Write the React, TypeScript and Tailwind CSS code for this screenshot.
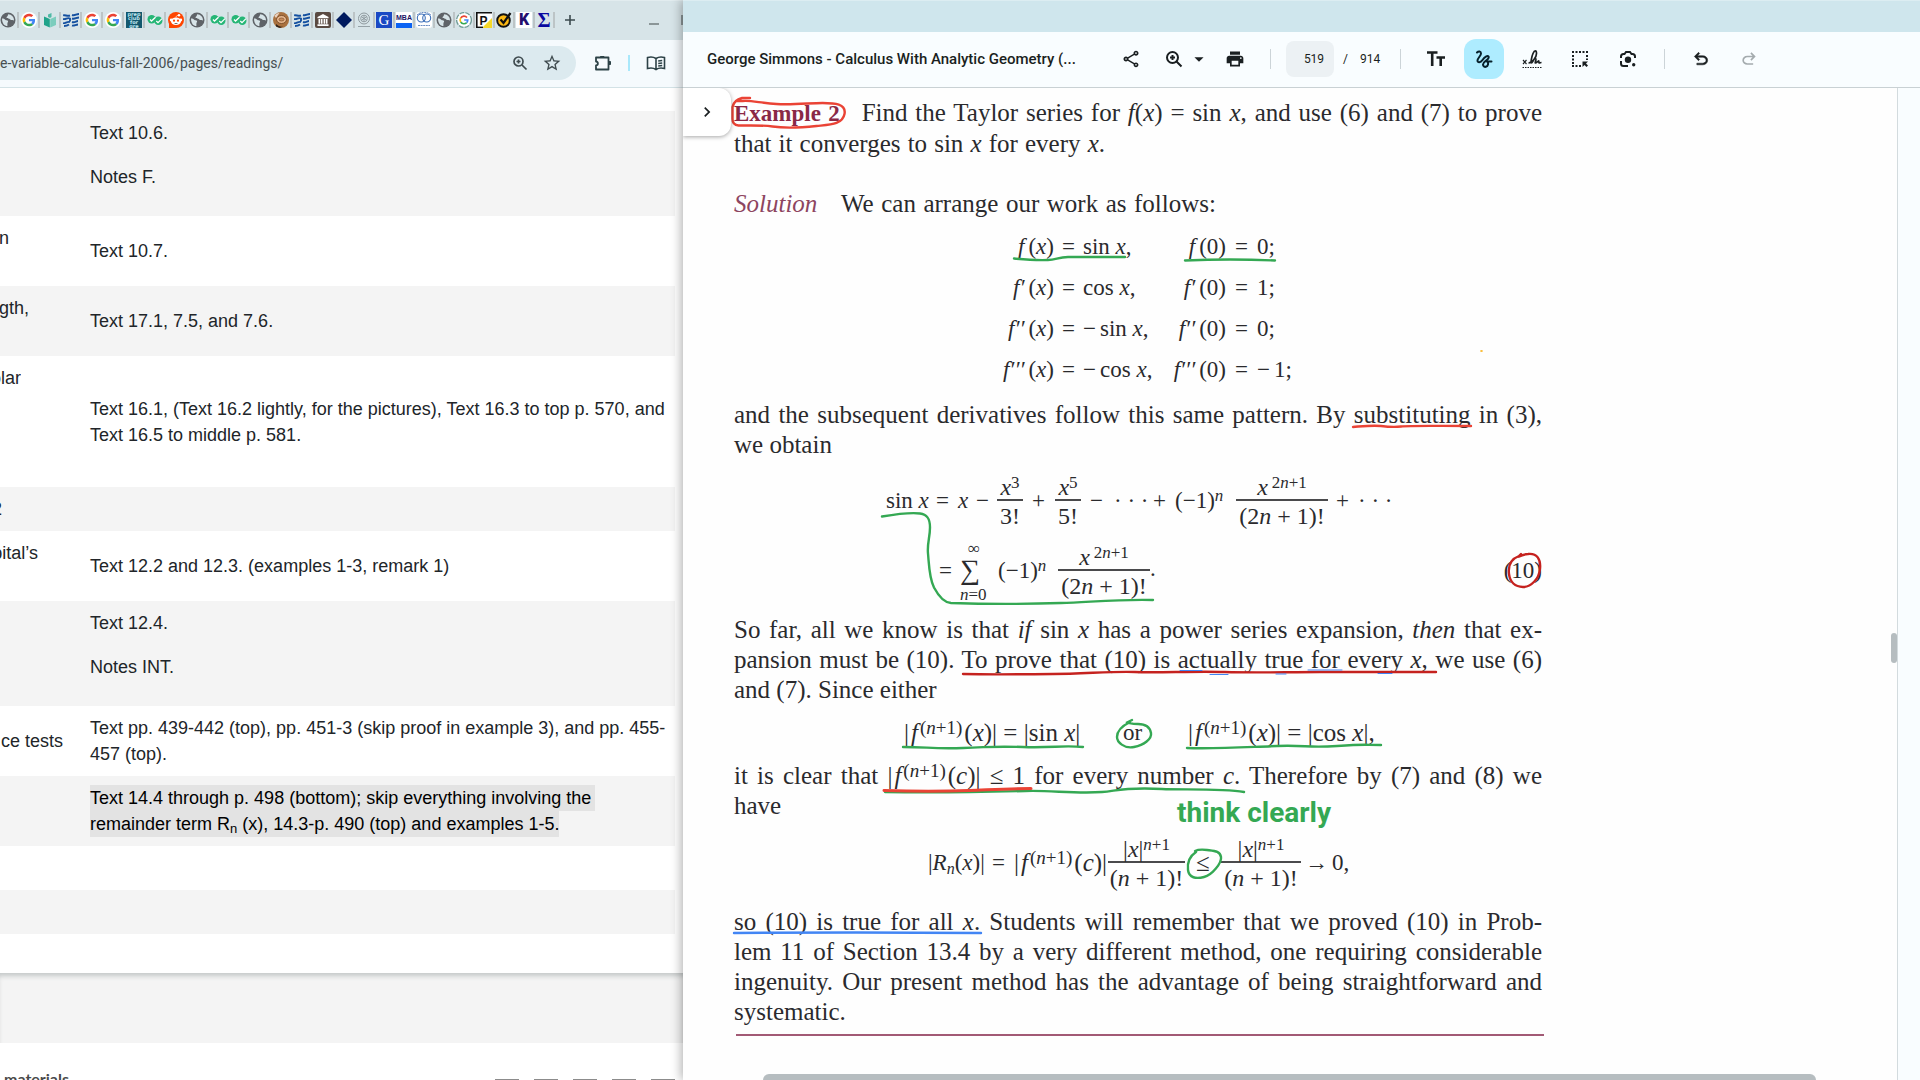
import type { ReactNode } from "react";
import { MdOutlineShare, MdPrint, MdArrowDropDown, MdStarBorder, MdChevronRight } from "react-icons/md";

/* ---------- favicons ---------- */

const Globe = () => (
  <svg viewBox="0 0 16 16" className="size-4">
    <circle cx="8" cy="8" r="7.500" fill="#5f6368" />
    <path d="M2 6.500c1.500 0 2.500.3 3.200 1.200.8.9 2.300.3 2.800 1.300.4 1-.6 1.500-.6 2.500v2.600C4.500 14 2 11.500 2 6.500Z" fill="#d7e4e8" />
    <path d="M8.200 2.200c-.6.8 0 1.300-.8 2.100-.7.700-1.200.8-.6 1.600.7.900 2.400.2 3 1.200.5.900 1.500 1 2.700.9l1.500.5C14 5 11.800 2.400 8.200 2.200Z" fill="#d7e4e8" />
  </svg>
);

const Google = () => (
  <svg viewBox="0 0 48 48" className="size-4">
    <circle cx="24" cy="24" r="24" fill="#fff" />
    <g transform="translate(5 5) scale(.79)">
      <path fill="#EA4335" d="M24 9.500c3.540 0 6.710 1.220 9.210 3.600l6.850-6.850C35.900 2.380 30.470 0 24 0 14.620 0 6.510 5.380 2.560 13.220l7.980 6.190C12.430 13.720 17.740 9.500 24 9.500z" />
      <path fill="#4285F4" d="M46.980 24.550c0-1.570-.15-3.090-.38-4.550H24v9.020h12.940c-.58 2.960-2.260 5.480-4.780 7.180l7.730 6c4.510-4.180 7.090-10.360 7.090-17.650z" />
      <path fill="#FBBC05" d="M10.530 28.590c-.48-1.450-.76-2.990-.76-4.590s.27-3.140.76-4.590l-7.980-6.190C.92 16.460 0 20.120 0 24c0 3.880.92 7.540 2.560 10.780l7.970-6.190z" />
      <path fill="#34A853" d="M24 48c6.480 0 11.930-2.130 15.890-5.810l-7.730-6c-2.150 1.450-4.920 2.300-8.160 2.300-6.260 0-11.570-4.220-13.470-9.910l-7.980 6.190C6.510 42.620 14.620 48 24 48z" />
    </g>
  </svg>
);

const Book = () => (
  <svg viewBox="0 0 16 16" className="size-4">
    <path d="M2 4.500 7.800 7v8.500L2 13Z" fill="#1fa38a" />
    <path d="M14 4.500 8.200 7v8.500L14 13Z" fill="#7ccdbd" />
    <path d="M6 2.500 9.500 1v4L8 6 6 5Z" fill="#4fb9a5" />
  </svg>
);

const Waves = () => (
  <svg viewBox="0 0 16 16" className="size-4" fill="none" stroke="#1450a0" strokeWidth="1.900">
    <path d="M0 3.500c2-1 4 1 7 0M0 7c3 1 4-2 7-.5v3M0 11c2 1 4-2 7-1M1 14c2 0 3 0 5-1.500M9 3c3 1 4-1 7-1M9 6.500c3 1 4-1 7-1M9 10c3 1 4-1 6-1M9 13.500c2 .5 4-1 6-1" />
  </svg>
);

const Prep = () => (
  <span className="block size-4 overflow-hidden bg-[#13586e] text-center font-['DejaVu_Sans'] text-[5px] leading-[4px] font-bold text-[#bfe6ee]">
    prep club for gre
  </span>
);

const Checks = () => (
  <svg viewBox="0 0 16 16" className="size-4">
    <circle cx="4.700" cy="7.300" r="4.200" fill="#26b676" />
    <circle cx="11.300" cy="8.700" r="4.200" fill="#26b676" />
    <path d="m3 7.500 1.500 1.500 4-3.800M9.300 9l1.700 1.600 4-4" fill="none" stroke="#fff" strokeWidth="1.300" />
  </svg>
);

const Reddit = () => (
  <svg viewBox="0 0 16 16" className="size-4">
    <circle cx="8" cy="8" r="8" fill="#ff4500" />
    <path d="M1 11v5h7Z" fill="#ff4500" />
    <ellipse cx="8" cy="9.300" rx="5" ry="3.800" fill="#fff" />
    <circle cx="3.200" cy="8" r="1.400" fill="#fff" />
    <circle cx="12.800" cy="8" r="1.400" fill="#fff" />
    <circle cx="11" cy="3.300" r="1.200" fill="#fff" />
    <path d="M8 5.500c.1-1.500 1-2.200 2.500-2.200" fill="none" stroke="#fff" strokeWidth=".7" />
    <circle cx="6" cy="8.700" r="1.100" fill="#ff4500" />
    <circle cx="10" cy="8.700" r="1.100" fill="#ff4500" />
    <path d="M6 11c1 1 3 1 4 0Z" fill="#222" />
  </svg>
);

const Pot = () => (
  <svg viewBox="0 0 16 16" className="size-4">
    <circle cx="8" cy="8" r="8" fill="#a9713f" />
    <ellipse cx="8.500" cy="7.500" rx="5" ry="4" fill="#e5b58c" stroke="#6f4321" strokeWidth=".8" />
    <ellipse cx="8.500" cy="7.500" rx="2.500" ry="1.500" fill="#c98c5b" stroke="#6f4321" strokeWidth=".6" />
    <path d="M3 12c2 2 5 3 7 2.500L7 16l-4-1.500Z" fill="#33251b" />
    <path d="M1.500 4c1-2 3-3 5-3L3 6Z" fill="#ead3c2" />
  </svg>
);

const Museum = () => (
  <svg viewBox="0 0 16 16" className="size-4">
    <rect width="16" height="16" rx="2" fill="#5a4a42" />
    <path d="M8 2 2.500 5v1.200h11V5ZM3.500 7h1.800v4.800H3.500ZM6 7h1.500v4.800H6ZM8.600 7h1.500v4.800H8.600ZM10.800 7h1.700v4.800h-1.700ZM2.500 12.300h11V14h-11Z" fill="#fff" />
  </svg>
);

const Diamond = () => (
  <svg viewBox="0 0 16 16" className="size-4">
    <path d="M8 0 16 8 8 16 0 8Z" fill="#001a5e" />
  </svg>
);

const Seal = () => (
  <svg viewBox="0 0 16 16" className="size-4" fill="none" stroke="#8f9a9f" strokeWidth="1">
    <circle cx="8" cy="6.500" r="5.500" />
    <circle cx="8" cy="6.500" r="3.300" />
    <path d="M8 4v5M6 5.200l4 2.600M10 5.200 6 7.800M2 14.500h12" strokeWidth=".9" />
  </svg>
);

const GLetter = () => (
  <span className="flex size-4 items-center justify-center bg-[#1a49c4] font-['Liberation_Serif'] text-[15px] leading-4 text-white">G</span>
);

const Mba = () => (
  <span className="flex size-4 flex-col bg-white text-center font-['Liberation_Sans'] text-[7px] leading-[11px] font-bold text-[#1b1464]">
    <span className="h-[11px]">MBA</span>
    <span className="h-[5px] bg-[#0b63f3]" />
  </span>
);

const Rings = () => (
  <svg viewBox="0 0 16 16" className="size-4">
    <rect width="16" height="16" rx="3" fill="#fff" />
    <circle cx="5.300" cy="6" r="4" fill="none" stroke="#3b6fb8" strokeWidth="1.100" />
    <circle cx="10.700" cy="6" r="4" fill="none" stroke="#3b6fb8" strokeWidth="1.100" />
    <path d="M1 3C4-.5 12-.5 15 3M2 13.500h12" fill="none" stroke="#6c8fc4" strokeWidth="1" strokeDasharray="2 .6" />
  </svg>
);

const GRing = () => (
  <svg viewBox="0 0 16 16" className="size-4">
    <circle cx="8" cy="8" r="7.400" fill="#fff" stroke="#6f9b96" strokeWidth="1.300" strokeDasharray="5 1" />
    <path d="M11 5.500A3.900 3.900 0 0 0 4.700 6" fill="none" stroke="#ea4335" strokeWidth="1.600" />
    <path d="M4.700 6a3.900 3.900 0 0 0 0 4" fill="none" stroke="#fbbc05" strokeWidth="1.600" />
    <path d="M4.700 10a3.900 3.900 0 0 0 6 .6" fill="none" stroke="#34a853" strokeWidth="1.600" />
    <path d="M10.700 10.600A4 4 0 0 0 11.800 8H8.200" fill="none" stroke="#4285f4" strokeWidth="1.600" />
  </svg>
);

const PBadge = () => (
  <svg viewBox="0 0 16 16" className="size-4">
    <rect width="16" height="16" fill="#fff" />
    <path d="M16 6v10H6Z" fill="#f5d829" />
    <path d="M.8 16V.8H16" fill="none" stroke="#111" strokeWidth="1.600" />
    <path d="M0 15.300h7" stroke="#111" strokeWidth="1.400" />
    <text x="3.500" y="12.500" fontSize="12" fontWeight="700" fontFamily="Liberation Sans" fill="#111">P</text>
  </svg>
);

const Tick = () => (
  <svg viewBox="0 0 16 16" className="size-4">
    <circle cx="7.500" cy="8.500" r="6.300" fill="#fdb913" stroke="#111" strokeWidth="1.900" />
    <path d="m4.500 7.500 3 3.500L14.500 1" fill="none" stroke="#111" strokeWidth="2.200" />
  </svg>
);

const KBadge = () => (
  <span className="flex size-4 items-center justify-center bg-white font-['Roboto'] text-[16px] leading-4 font-black text-[#240f6e]">K</span>
);

const Sigma = () => (
  <span className="flex size-4 items-center justify-center font-['Liberation_Serif'] text-[20px] leading-4 font-bold text-[#0808a0]">Σ</span>
);

const wideTabs = [Globe, Google, Book, Waves, Google, Google, Prep, Checks, Reddit, Globe, Checks, Checks, Globe, Pot, Waves, Museum];
const tightTabs = [Diamond, Seal, GLetter, Mba, Rings, Globe, GRing, PBadge, Tick, KBadge, Sigma];

const TabStrip = () => (
  <div className="flex h-10 items-center border-t border-[#e2ecef] bg-[#d7e4e8] pb-px text-[#3c4a4e]">
    {wideTabs.map((Icon, i) => (
      <button key={i} aria-label={`Tab ${i + 1}`} className="flex w-[21px] shrink-0 gap-px">
        <Icon />
        <span className="h-4 w-0.5 bg-[#bcc4c6]" />
      </button>
    ))}
    {tightTabs.map((Icon, i) => (
      <button key={i} aria-label={`Tab ${i + 17}`} className="flex w-5 shrink-0 gap-px">
        <Icon />
        <span className="h-4 w-0.5 bg-[#bcc4c6]" />
      </button>
    ))}
    <button aria-label="New tab" className="ml-2 shrink-0">
      <svg viewBox="0 0 12 12" className="size-3" stroke="#3c4a4e" strokeWidth="1.600">
        <path d="M6 1v10M1 6h10" />
      </svg>
    </button>
    <button aria-label="Minimize" className="mt-2 ml-auto h-0.5 w-[10px] bg-[#8b9698]" />
    <button aria-label="Maximize" className="ml-[22px] h-[10px] w-0.5 bg-[#8b9698]" />
  </div>
);

const AddressBar = () => (
  <div className="flex h-12 items-center border-b border-[#d3e2e6] bg-[#f5fafd] pb-px text-[#3b4b50]">
    <div className="flex h-[34px] w-[576px] items-center rounded-r-full bg-[#dceaef]">
      <input
        aria-label="Address"
        readOnly
        value="e-variable-calculus-fall-2006/pages/readings/"
        className="min-w-0 flex-1 bg-transparent font-['Roboto'] text-[14px] text-[#474f51] outline-none"
      />
      <button aria-label="Zoom" className="mr-[14px]">
        <svg viewBox="0 0 16 16" className="size-4" fill="none" stroke="#3f4b4f" strokeWidth="1.700">
          <circle cx="6.500" cy="6.500" r="4.500" />
          <path d="m10 10 4.500 4.500M4.500 6.500h4M6.500 4.500v4" />
        </svg>
      </button>
      <button aria-label="Bookmark" className="mr-[14px] text-[20px] text-[#3f4b4f]">
        <MdStarBorder />
      </button>
    </div>
    <button aria-label="Extensions" className="ml-[18px]">
      <svg viewBox="0 0 18 18" className="size-[18px]" fill="none" stroke="#2d4247" strokeWidth="1.800">
        <path d="M2 3.500h12.500V9v6.500H2v-4c2.500-.3 2.500-3.700 0-4Z" strokeLinejoin="round" />
        <path d="M6.500 2.500h3.500v1H6.500ZM15 7.500h1.500v3H15Z" fill="#2d4247" strokeWidth="1" />
      </svg>
    </button>
    <span className="ml-4 h-4 w-0.5 bg-[#a9e8fb]" />
    <button aria-label="Reading mode" className="ml-4">
      <svg viewBox="0 0 20 16" className="h-4 w-5" fill="none" stroke="#2d4247" strokeWidth="1.600">
        <path d="M10 3.500C7.500 1.800 4 1.800 1.500 2.500v11c2.500-.7 6-.7 8.500 1 2.500-1.700 6-1.700 8.500-1v-11C16 1.800 12.500 1.800 10 3.500Zm0 0v11M12.200 6l4-.5M12.200 8.500l4-.5M12.200 11l4-.5" />
      </svg>
    </button>
  </div>
);

/* ---------- readings table ---------- */

type Row = { h: string; topic?: string; clip?: number; top?: boolean; body?: ReactNode };

const rows: Row[] = [
  { h: "h-[105px]", body: <><p className="mb-[18px]">Text 10.6.</p><p className="mb-[17px]">Notes F.</p></> },
  { h: "h-[70px]", topic: "n", clip: 9, top: true, body: "Text 10.7." },
  { h: "h-[70px]", topic: "gth,", clip: 29, top: true, body: "Text 17.1, 7.5, and 7.6." },
  { h: "h-[131px]", topic: "olar", clip: 21, top: true, body: <>Text 16.1, (Text 16.2 lightly, for the pictures), Text 16.3 to top p. 570, and<br />Text 16.5 to middle p. 581.</> },
  { h: "h-[44px]", topic: "2", clip: 2 },
  { h: "h-[70px]", topic: "pital’s", clip: 38, top: true, body: "Text 12.2 and 12.3. (examples 1-3, remark 1)" },
  { h: "h-[105px]", body: <><p className="mb-[18px]">Text 12.4.</p><p className="mb-[17px]">Notes INT.</p></> },
  { h: "h-[70px]", topic: "ce tests", clip: 63, body: <>Text pp. 439-442 (top), pp. 451-3 (skip proof in example 3), and pp. 455-<br />457 (top).</> },
  {
    h: "h-[70px]",
    body: (
      <span className="text-black">
        <span className="inline-block bg-[#e3e3e3] pr-1">Text 14.4 through p. 498 (bottom); skip everything involving the</span>
        <br />
        <span className="inline-block bg-[#e3e3e3]">
          remainder term R<sub className="text-[13px] leading-none">n</sub> (x), 14.3-p. 490 (top) and examples 1-5.
        </span>
      </span>
    ),
  },
  { h: "h-[44px]" },
  { h: "h-[44px]" },
];

const Readings = () => (
  <table className="mt-[23px] mr-2 border-collapse font-['Liberation_Sans'] text-[18px] leading-[26px] text-[#212529]">
    <tbody>
      {rows.map((r, i) => (
        <tr key={i} className={i % 2 === 0 ? `${r.h} bg-[#f4f4f4]` : `${r.h} bg-white`}>
          <td className={r.top ? "w-[90px] pt-[9px] align-top" : "w-[90px] align-middle"}>
            <div className="flex justify-end overflow-hidden whitespace-nowrap" style={{ width: r.clip ?? 0 }}>
              {r.topic}
            </div>
          </td>
          <td className="align-middle whitespace-nowrap">{r.body}</td>
        </tr>
      ))}
    </tbody>
  </table>
);

const BrowserWindow = () => (
  <section className="flex min-w-0 flex-col overflow-hidden bg-white">
    <TabStrip />
    <AddressBar />
    <div className="flex flex-col">
      <Readings />
      <div className="mt-[39px] h-[70px] bg-[#f4f4f4] shadow-[inset_0_5px_5px_-2px_#c4c8c8]" />
      <div className="flex h-[37px] items-start justify-between overflow-hidden pt-6 pr-2 pl-1 font-['Lato'] text-[16px] leading-6 font-bold text-[#4a4a4a]">
        <span>materials</span>
        <span className="mt-3 flex gap-[15px]">
          {[0, 1, 2, 3, 4].map((i) => (
            <span key={i} className="size-6 border-t-2 border-[#8c8c8c]" />
          ))}
        </span>
      </div>
    </div>
  </section>
);

/* ---------- viewer toolbar ---------- */

const Divider = ({ className }: { className: string }) => <span className={`h-5 w-px bg-[#ccd4d8] ${className}`} />;

const UNDO =
  "M280-200v-80h284q63 0 109.500-40T720-420q0-60-46.500-100T564-560H312l104 104-56 56-200-200 200-200 56 56-104 104h252q97 0 166.500 63T800-420q0 94-69.500 157T564-200H280Z";

const ViewerToolbar = () => (
  <header className="flex h-14 shrink-0 items-center border-b border-[#c9d1d4] bg-[#f9fdff] pb-px pl-6 text-[#1a1f21]">
    <h1 className="w-[360px] font-['Roboto'] text-[15px] font-medium whitespace-nowrap">George Simmons - Calculus With Analytic Geometry (...</h1>
    <button aria-label="Share" className="ml-[54px] text-[20px]"><MdOutlineShare /></button>
    <button aria-label="Zoom" className="ml-6 flex items-center">
      <svg viewBox="0 0 18 18" className="size-[18px]" fill="none" stroke="currentColor" strokeWidth="2">
        <circle cx="7.500" cy="7.500" r="5.500" />
        <path d="m11.500 11.500 5 5M5 7.500h5M7.500 5v5" />
      </svg>
      <MdArrowDropDown className="ml-[5px] text-[22px]" />
    </button>
    <button aria-label="Print" className="ml-[15px] text-[20px]"><MdPrint /></button>
    <Divider className="ml-[25px]" />
    <input
      aria-label="Page"
      readOnly
      value="519"
      className="ml-[15px] h-9 w-12 rounded-lg bg-[#ecf1f4] pl-2 text-center font-['Roboto'] text-[12px] outline-none"
    />
    <span className="ml-[9px] font-['Roboto'] text-[12px]">/</span>
    <span className="ml-3 font-['Roboto'] text-[12px]">914</span>
    <Divider className="ml-5" />
    <button aria-label="Text size" className="ml-[26px]">
      <svg viewBox="0 0 18 16" className="h-4 w-[18px]" stroke="currentColor" strokeWidth="2.600" fill="none">
        <path d="M0 1.500h10.500M5.200 1.500V15M9.500 6.500H18M13.700 6.500V15" />
      </svg>
    </button>
    <button aria-label="Draw" className="ml-[19px] flex h-10 w-10 items-center justify-center rounded-xl bg-[#aeecff]">
      <svg viewBox="0 0 18 18" className="size-[18px]" fill="none" stroke="#07202b" strokeWidth="2" strokeLinecap="round" strokeLinejoin="round">
        <path d="M2 2.500C3.500 1 6 1 6 3.500S2.500 8 2.500 10.500s3 2.500 5-.5 5-5 6-3.500-1 3-3 4.500-3 3.500-2 5 4 1 4.500-1.500-1-3.500-2.500-3.500M13 11.500h3.500" />
      </svg>
    </button>
    <button aria-label="Sign" className="ml-[18px]">
      <svg viewBox="0 0 20 20" className="size-5" fill="none" stroke="currentColor" strokeWidth="1.700">
        <path d="m1 11 3.500 4M4.500 11 1 15" strokeWidth="1.200" />
        <path d="M6.500 14c4 0 8-6 8-9.500C14.500 1 12.500 1 11 4.500 9.500 8 8.500 14 9.500 14s2.500-5 4-4.500-1 4.500 0 4.500 2-1.500 3-2c.7-.3 0 2 .7 2s1.500-.5 2.300-.5" />
        <path d="M.5 18.500h19" strokeDasharray="1.500 1" strokeWidth="1.200" />
      </svg>
    </button>
    <button aria-label="Select area" className="ml-[29px]">
      <svg viewBox="0 0 18 18" className="size-[18px]" fill="none" stroke="currentColor" strokeWidth="2">
        <path d="M1 2h16M1 16h9M2 5v9M16 5v5" strokeDasharray="2 1.500" />
        <path d="M11.500 11.500H17l-2 2 2 2-1.500 1.500-2-2-2 2Z" fill="currentColor" stroke="none" />
      </svg>
    </button>
    <button aria-label="Search with lens" className="ml-[30px]">
      <svg viewBox="0 0 18 18" className="size-[18px]" fill="none" stroke="currentColor" strokeWidth="2">
        <path d="M2 8V6.500Q2 4 4.500 4h1L7 2h4l1.500 2h1Q16 4 16 6.500V8M2 11v2.500Q2 16 4.500 16H9" />
        <circle cx="9" cy="9.700" r="3.200" fill="currentColor" stroke="none" />
        <circle cx="14.700" cy="14.700" r="1.700" fill="currentColor" stroke="none" />
      </svg>
    </button>
    <Divider className="ml-[27px]" />
    <button aria-label="Undo" className="ml-[26px]">
      <svg viewBox="0 -960 960 960" className="size-5" fill="currentColor" stroke="currentColor" strokeWidth="24"><path d={UNDO} /></svg>
    </button>
    <button aria-label="Redo" className="ml-7 text-[#a4abae]" disabled>
      <svg viewBox="0 -960 960 960" className="size-5 -scale-x-100" fill="currentColor"><path d={UNDO} /></svg>
    </button>
  </header>
);

/* ---------- mathematics ---------- */

const Sup = ({ children, className = "text-[17px]" }: { children: ReactNode; className?: string }) => (
  <sup className={`-top-[7px] leading-none ${className}`}>{children}</sup>
);

const Frac = ({ top, bottom, className }: { top: ReactNode; bottom: ReactNode; className: string }) => (
  <span className={`flex shrink-0 flex-col text-center text-[24px] whitespace-nowrap ${className}`}>
    <span className="h-[28px] border-b-2 border-[#4a4a4c] leading-[28px]">{top}</span>
    <span className="h-[28px] leading-[30px]">{bottom}</span>
  </span>
);

const T = ({ w, children }: { w: string; children: ReactNode }) => <span className={`shrink-0 whitespace-nowrap ${w}`}>{children}</span>;

const Line = ({ w = "", children }: { w?: string; children: ReactNode }) => (
  <span className={`block whitespace-nowrap [text-align-last:justify] ${w}`}>{children}</span>
);

const X = () => <i>x</i>;

const power = <><X /><Sup className="ml-1 text-[17px]">2<i>n</i>+1</Sup></>;
const fn = <><span className="mr-0.5">|</span><i>f</i><Sup className="mx-0.5 text-[19px]">(<i>n</i>+1)</Sup></>;
const oddFactorial = <>(2<i>n</i> + 1)!</>;
const absPower = <>|<X />|<Sup><i>n</i>+1</Sup></>;
const factorial = <>(<i>n</i> + 1)!</>;

const derivatives = [
  ["", "sin", "", "0;"],
  ["′", "cos", "", "1;"],
  ["′′", "sin", "−", "0;"],
  ["′′′", "cos", "−", "1;"],
];

const Derivatives = () => (
  <table className="mt-[7px] ml-[262px] border-collapse text-[23px] leading-[41px]">
    <tbody>
      {derivatives.map(([primes, name, sign, v], i) => (
        <tr key={i}>
          <td className="w-[58px] text-right whitespace-nowrap"><i className="mr-1">f{primes}</i>(<X />)</td>
          <td className="w-[29px] text-center">=</td>
          <td className="w-[86px] whitespace-nowrap">{sign && <span className="mr-1">{sign}</span>}{name} <X />,</td>
          <td className="w-[57px] text-right whitespace-nowrap"><i className="mr-1">f{primes}</i>(0)</td>
          <td className="w-[31px] text-center">=</td>
          <td className="whitespace-nowrap">{i === 3 && <span className="mr-1">−</span>}{v}</td>
        </tr>
      ))}
    </tbody>
  </table>
);

/* Handwritten marks laid over the page */
const Ink = () => (
  <svg viewBox="683 88 1237 992" className="pointer-events-none absolute top-0 left-0 h-[992px] w-[1237px]" fill="none" strokeWidth="2.400" strokeLinecap="round">
    <g stroke="#ea4335">
      <path d="M750 98h-8q-8 2-9.500 9V119q0 6 6 6.500c15 0 24-.5 34 1s30 1 44-.5 26-1.500 28-12-10-11-22-11-30 2-46 1-26-4-34-3h-6" />
      <path d="M1353 427c12-1 20-2 28-1s12 1.500 20 .5 30-.5 70-.5" />
    </g>
    <g stroke="#34a853">
      <path d="M1014 258.500q20 2 34 1.500c8 0 10-3 20-3h57" />
      <path d="M1185 260.500q45-2 90 0" />
      <path d="M882 516.500c12-2 30-4 38-3 8 1 10 6 10 14 0 10-3 16-2 26s1 24 6 34q8 15 17 15.500c30 1 80 1 110 0s60-4 92-3" />
      <path d="M903 747c25 0 30 2 60 1s30-2 60-1 40-2 60 0" />
      <path d="M1187 748c30 1 60-1 90-2s30 2 60 0 25-1 44-1" />
      <path d="M1130 722c-10 5-13 10-13 15s7 12 17 10 18-8 17-14-5-9-13-9-10-2-12-1l6-3" />
      <path d="M885 792c50 1 100 0 140-1 25-1 50 3 77 1 15-1 20-5 60-3 20 1 60-1 82 3" />
      <path d="M1196 852c-6 4-9 10-8 18s8 9 16 7 18-14 17-20-6-6-14-7-10 0-12 1" />
    </g>
    <path d="M884 790.500c30 1 60 1 85 0s40-2 62-2" stroke="#ea4335" strokeWidth="3" />
    <g stroke="#c5221f">
      <path d="M1519 556c-8 3-11 10-10 18s6 13 14 13 16-8 17-18-3-16-12-15c-4 0-6 1-10 3l3-3" />
      <path d="M963 674c40 1 60 0 90 0s60-3 82-2 60-1 90 0 60 0 95 0 60 0 116 0" />
    </g>
    <g stroke="#4285f4">
      <path d="M734 933q120-1 247 0" />
      <path d="M1180 670.500h22M1210 674.500h18M1276 674h10M1308 670h34M1378 673.500h14" strokeWidth="1" />
    </g>
    <path d="M1481 351h1" stroke="#f9ab00" strokeWidth="1.600" />
  </svg>
);

const Page = () => (
  <article className="relative w-[808px] font-['Liberation_Serif'] text-[25px] leading-[30px] text-[#2a2a2d]">
    <p className="pt-[10px]">
      <Line>
        <b className="mr-[14px] text-[23px] text-[#8a2846]">Example 2</b> Find the Taylor series for <i>f</i>(<X />) = sin <X />, and use (6) and (7) to prove
      </Line>
      <Line w="w-[371px]">that it converges to sin <X /> for every <X />.</Line>
    </p>
    <p className="mt-[30px] flex">
      <i className="w-[107px] text-[#8d4560]">Solution</i>
      <Line w="w-[375px]">We can arrange our work as follows:</Line>
    </p>
    <Derivatives />
    <p className="mt-[10px]">
      <Line>and the subsequent derivatives follow this same pattern. By substituting in (3),</Line>
      <span>we obtain</span>
    </p>
    <div className="mt-[13px] ml-[152px] flex h-14 items-center text-[23px]">
      <T w="w-[50px]">sin <X /></T>
      <T w="w-[22px]">=</T>
      <T w="w-[18px]"><X /></T>
      <T w="w-[21px]">−</T>
      <Frac className="w-[26px]" top={<><X /><Sup>3</Sup></>} bottom="3!" />
      <T w="w-[32px] pl-[9px]">+</T>
      <Frac className="w-[26px]" top={<><X /><Sup>5</Sup></>} bottom="5!" />
      <T w="w-[33px] pl-[9px]">−</T>
      <T w="w-[39px]">· · ·</T>
      <T w="w-[22px]">+</T>
      <T w="w-[61px]">(−1)<Sup><i>n</i></Sup></T>
      <Frac className="w-[92px]" top={power} bottom={oddFactorial} />
      <T w="w-[30px] pl-2">+</T>
      <T w="w-[39px]">· · ·</T>
    </div>
    <div className="mt-[14px] ml-[205px] flex h-14 items-center text-[23px]">
      <T w="w-[21px]">=</T>
      <span className="flex w-[38px] shrink-0 flex-col pt-1">
        <span className="h-3 pl-2 text-[17px] leading-3">∞</span>
        <span className="h-8 text-[28px] leading-[30px]">∑</span>
        <span className="h-4 text-[17px] leading-4 whitespace-nowrap"><i>n</i>=0</span>
      </span>
      <T w="w-[60px]">(−1)<Sup><i>n</i></Sup></T>
      <Frac className="w-[92px]" top={power} bottom={oddFactorial} />
      <span className="mb-1">.</span>
      <span className="ml-auto">(10)</span>
    </div>
    <p className="mt-4">
      <Line>So far, all we know is that <i>if</i> sin <X /> has a power series expansion, <i>then</i> that ex-</Line>
      <Line>pansion must be (10). To prove that (10) is actually true for every <X />, we use (6)</Line>
      <span>and (7). Since either</span>
    </p>
    <div className="mt-[13px] ml-[170px] flex h-[30px] items-center text-[25px]">
      <T w="w-[219px]">{fn}(<X />)| = |sin <X />|</T>
      <T w="w-[65px] text-[23px]">or</T>
      <T w="w-[184px]">{fn}(<X />)| = |cos <X />|,</T>
    </div>
    <p className="mt-[13px]">
      <Line>it is clear that {fn}(<i>c</i>)| ≤ 1 for every number <i>c</i>. Therefore by (7) and (8) we</Line>
      <span className="flex h-[30px]">
        <span className="w-[443px]">have</span>
        <strong className="mt-[7px] font-['Roboto'] text-[28px] font-bold text-[#34a853]">think clearly</strong>
      </span>
    </p>
    <div className="mt-[14px] ml-[194px] flex h-14 items-center text-[23px]">
      <T w="w-[64px]">|<i>R</i><sub className="text-[16px] leading-none"><i>n</i></sub>(<X />)|</T>
      <T w="w-[22px]">=</T>
      <T w="w-[94px] text-[25px]">{fn}(<i>c</i>)|</T>
      <Frac className="w-[77px]" top={absPower} bottom={factorial} />
      <T w="w-[36px] pl-[11px] text-[25px]">≤</T>
      <Frac className="w-[80px]" top={absPower} bottom={factorial} />
      <T w="w-[31px] pl-1">→</T>
      <T w="w-5">0,</T>
    </div>
    <p className="mt-4">
      <Line>so (10) is true for all <X />. Students will remember that we proved (10) in Prob-</Line>
      <Line>lem 11 of Section 13.4 by a very different method, one requiring considerable</Line>
      <Line>ingenuity. Our present method has the advantage of being straightforward and</Line>
      <span>systematic.</span>
    </p>
    <hr className="mt-[7px] -mr-0.5 ml-0.5 border-t-2 border-[#a25a75]" />
  </article>
);

const Viewer = () => (
  <section className="relative z-10 flex min-w-0 flex-col bg-[#fefefe] shadow-[-2px_0_10px_rgba(0,0,0,0.3)]">
    <div className="h-8 shrink-0 border-t border-[#dcedf2] bg-[#cfe6ed]" />
    <ViewerToolbar />
    <div className="relative flex min-h-0 flex-1 overflow-hidden">
      <div className="min-w-0 flex-1 pl-[51px]">
        <Page />
      </div>
      <div className="w-[23px] shrink-0 border-l border-[#d3dbde] bg-[#f9fdff]" />
      <Ink />
      <button aria-label="Open sidebar" className="absolute top-0 left-0 flex size-12 items-center justify-center rounded-r-xl bg-white text-[20px] text-[#1a1f21] shadow-[0_1px_4px_rgba(0,0,0,0.35)]">
        <MdChevronRight />
      </button>
      <div className="absolute top-[545px] right-[23px] h-[30px] w-[6px] rounded-full bg-[#b6bdc0]" />
      <div className="absolute right-[104px] bottom-0 left-20 h-[6px] rounded-t-full bg-[#b6bdc0]" />
    </div>
  </section>
);

export default function App() {
  return (
    <main className="grid h-screen grid-cols-[683fr_1237fr] grid-rows-[minmax(0,1fr)] overflow-hidden">
      <BrowserWindow />
      <Viewer />
    </main>
  );
}
